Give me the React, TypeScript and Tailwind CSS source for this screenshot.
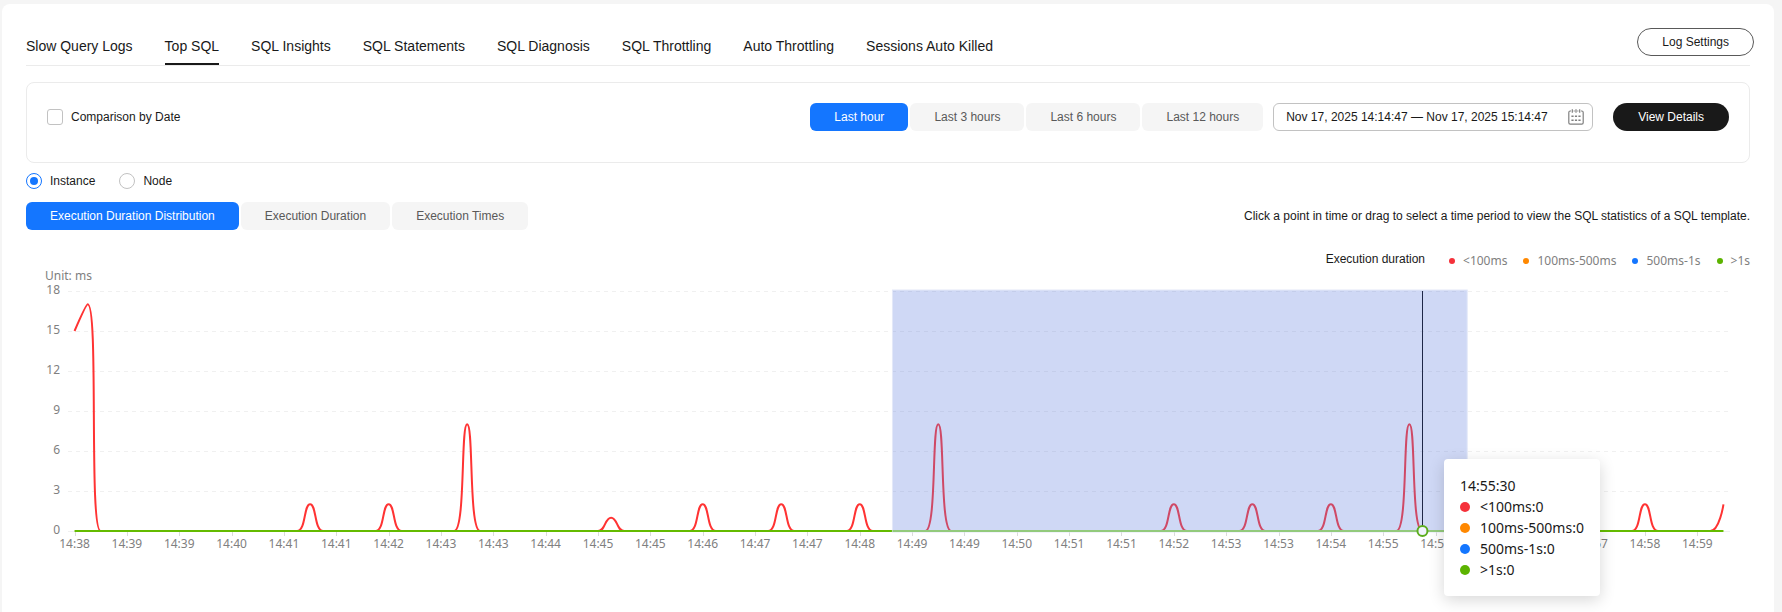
import React, { useEffect, useLayoutEffect, useRef, useState } from 'react';
import { clsx } from 'clsx';

const tabs = [
  "Slow Query Logs",
  "Top SQL",
  "SQL Insights",
  "SQL Statements",
  "SQL Diagnosis",
  "SQL Throttling",
  "Auto Throttling",
  "Sessions Auto Killed",
];

const ranges = ["Last hour", "Last 3 hours", "Last 6 hours", "Last 12 hours"];
const metrics = ["Execution Duration Distribution", "Execution Duration", "Execution Times"];

const legend = [
  { label: "<100ms", dot: "bg-[#f5313a]" },
  { label: "100ms-500ms", dot: "bg-[#ff8800]" },
  { label: "500ms-1s", dot: "bg-[#1476ff]" },
  { label: ">1s", dot: "bg-[#5cb300]" },
];

// one sample every 10 seconds, starting at 14:38:20
const SAMPLE_COUNT = 127;
const START_SECONDS = 14 * 3600 + 38 * 60 + 20;
const samples: Record<number, number> = {
  0: 15, 1: 17, 18: 2, 24: 2, 30: 8, 41: 1, 48: 2, 54: 2, 60: 2,
  66: 8, 84: 2, 90: 2, 96: 2, 102: 8, 120: 2, 126: 2,
};
const values = Array.from({ length: SAMPLE_COUNT }, (_, i) => samples[i] ?? 0);

const HOVER_INDEX = 103;
const BRUSH = { from: 62.5, to: 106.42 };

const GRID = { left: 42, right: 20, top: 22, height: 240 };
const MAX = 18;

type Point = [number, number];

const clamp = (v: number, a: number, b: number) =>
  Math.max(Math.min(a, b), Math.min(Math.max(a, b), v));

// smooth line whose control points never leave the range of the neighbouring samples
const smoothPath = (pts: Point[], smooth = 0.5) => {
  let d = `M${pts[0][0]},${pts[0][1]}`;
  let prevCp = pts[0];
  for (let i = 1; i < pts.length; i++) {
    const prev = pts[i - 1];
    const cur = pts[i];
    const next = pts[i + 1];
    let cpIn = cur;
    let cpOut = cur;
    if (next) {
      const lenPrev = Math.hypot(cur[0] - prev[0], cur[1] - prev[1]);
      const lenNext = Math.hypot(next[0] - cur[0], next[1] - cur[1]);
      const k = (smooth * lenNext) / (lenNext + lenPrev);
      const outX = clamp(cur[0] + (next[0] - prev[0]) * k, cur[0], next[0]);
      const outY = clamp(cur[1] + (next[1] - prev[1]) * k, cur[1], next[1]);
      cpIn = [
        clamp(cur[0] - ((outX - cur[0]) * lenPrev) / lenNext, prev[0], cur[0]),
        clamp(cur[1] - ((outY - cur[1]) * lenPrev) / lenNext, prev[1], cur[1]),
      ];
      cpOut = [
        clamp(cur[0] + ((cur[0] - cpIn[0]) * lenNext) / lenPrev, cur[0], next[0]),
        clamp(cur[1] + ((cur[1] - cpIn[1]) * lenNext) / lenPrev, cur[1], next[1]),
      ];
    }
    d += `C${prevCp[0]},${prevCp[1]} ${cpIn[0]},${cpIn[1]} ${cur[0]},${cur[1]}`;
    prevCp = cpOut;
  }
  return d;
};

const timeLabel = (index: number) => {
  const s = START_SECONDS + index * 10;
  return `${Math.floor(s / 3600)}:${String(Math.floor((s % 3600) / 60)).padStart(2, "0")}`;
};

const CalendarIcon = () => (
  <svg width="16" height="16" viewBox="0 0 16 16" fill="none" stroke="#808080" aria-hidden="true">
    <path d="M3 2H2.2Q0.8 2 0.8 3.4V13.8Q0.8 15.2 2.2 15.2H13.8Q15.2 15.2 15.2 13.8V3.4Q15.2 2 13.8 2H13M5.6 2h1.2M9.2 2h1.2" strokeWidth="1.2" />
    <path d="M4.3 0.3v3.4M8 0.3v3.4M11.7 0.3v3.4" strokeWidth="1.2" />
    <path d="M3.4 7.2h2.2M6.9 7.2h2.2M10.4 7.2h2.2M3.4 11.2h2.2M6.9 11.2h2.2M10.4 11.2h2.2" strokeWidth="1.6" />
  </svg>
);

const Segmented: React.FC<{ items: string[]; label: string }> = ({ items, label }) => {
  const [active, setActive] = useState(items[0]);

  return (
    <div role="group" aria-label={label} className="flex gap-0.5">
      {items.map((item) => (
        <button
          key={item}
          type="button"
          aria-pressed={item === active}
          onClick={() => setActive(item)}
          className={clsx(
            "h-7 rounded-md px-6 whitespace-nowrap",
            item === active ? "bg-[#1476ff] text-white" : "bg-[#f5f5f5] text-[#595959]"
          )}
        >
          {item}
        </button>
      ))}
    </div>
  );
};

const Tooltip: React.FC<{ left: number }> = ({ left }) => (
  <div
    className="absolute top-[190px] rounded bg-white p-4 text-sm leading-[21px] whitespace-nowrap text-[#191919] shadow-[0_4px_16px_rgba(0,0,0,0.16)]"
    style={{ left }}
  >
    <div>14:55:30</div>
    {legend.map((item) => (
      <div key={item.label} className="flex items-center">
        <span className={clsx("mr-2.5 size-2.5 rounded-full", item.dot)} />
        <span>{item.label}:0</span>
      </div>
    ))}
  </div>
);

const DurationChart: React.FC = () => {
  const ref = useRef<HTMLDivElement>(null);
  const [width, setWidth] = useState(0);

  useLayoutEffect(() => {
    setWidth(ref.current?.clientWidth ?? 0);
  }, []);

  useEffect(() => {
    const onResize = () => setWidth(ref.current?.clientWidth ?? 0);
    window.addEventListener("resize", onResize);
    return () => window.removeEventListener("resize", onResize);
  }, []);

  const right = width - GRID.right;
  const bottom = GRID.top + GRID.height;
  const band = (right - GRID.left) / SAMPLE_COUNT;
  const x = (i: number) => GRID.left + band * (i + 0.5);
  const y = (v: number) => bottom - (v / MAX) * GRID.height;
  const hoverX = Math.round(x(HOVER_INDEX)) + 0.5;

  return (
    <div ref={ref} className="relative h-[344px] overflow-hidden font-['Noto_Sans',sans-serif]">
      {width > 0 && (
        <>
          <svg width={width} height="344" className="block" role="img" aria-label="Execution duration distribution">
            <g fill="#808080" fontSize="12">
              <text x="19" y="11">Unit: ms</text>
              {[18, 15, 12, 9, 6, 3, 0].map((v) => (
                <text key={v} x="34" y={y(v) + 3} textAnchor="end">{v}</text>
              ))}
            </g>
            <g stroke="#f0f0f0">
              {[18, 15, 12, 9, 6, 3].map((v) => (
                <line key={v} x1={GRID.left} x2={right} y1={y(v) + 0.5} y2={y(v) + 0.5} strokeDasharray="4 4" />
              ))}
              <line x1={GRID.left} x2={right} y1={bottom + 0.5} y2={bottom + 0.5} />
            </g>
            {values.map((_, i) => i % 4 === 0 && (
              <g key={i}>
                <line x1={Math.round(x(i)) + 0.5} x2={Math.round(x(i)) + 0.5} y1={bottom} y2={bottom + 5} stroke="#dbdbdb" />
                <text x={x(i)} y={bottom + 17} textAnchor="middle" fill="#808080" fontSize="12">{timeLabel(i)}</text>
              </g>
            ))}
            <path d={smoothPath(values.map((v, i): Point => [x(i), y(v)]))} fill="none" stroke="#ff3333" strokeWidth="2" strokeLinejoin="bevel" />
            <line x1={x(0)} x2={x(SAMPLE_COUNT - 1)} y1={bottom} y2={bottom} stroke="#64bb00" strokeWidth="2" />
            <rect
              x={x(BRUSH.from)}
              y={GRID.top - 1}
              width={x(BRUSH.to) - x(BRUSH.from)}
              height={GRID.height + 2}
              fill="#5f7fdf"
              fillOpacity="0.3"
              stroke="#e3e8f8"
            />
            <line x1={x(BRUSH.from)} x2={x(BRUSH.to)} y1={bottom} y2={bottom} stroke="#93ca7c" strokeWidth="2" />
            <line x1={hoverX} x2={hoverX} y1={GRID.top} y2={bottom} stroke="#1f2747" />
            <circle cx={x(HOVER_INDEX)} cy={bottom} r="5" fill="#f0f3fd" stroke="#5cad1e" strokeWidth="2" />
          </svg>
          <Tooltip left={Math.round(x(HOVER_INDEX)) + 22} />
        </>
      )}
    </div>
  );
};

const App: React.FC = () => {
  const [scope, setScope] = useState("Instance");

  return (
    <div className="min-h-screen bg-[#f5f5f5] pt-1 pr-2 pl-0.5 font-['Liberation_Sans',Arial,sans-serif] text-xs text-[#191919]">
      <main className="rounded-t-lg bg-white px-6 pt-6">
        <header className="relative mb-4 flex border-b border-[#ebebeb]">
          <nav className="flex gap-8 text-sm">
            {tabs.map((tab) => (
              <a
                key={tab}
                href="#"
                className={clsx(
                  "border-b-2 pt-2 pb-[7px] leading-5 whitespace-nowrap",
                  tab === "Top SQL" ? "border-[#191919]" : "border-transparent"
                )}
              >
                {tab}
              </a>
            ))}
          </nav>
          <button type="button" className="absolute top-0 -right-1 h-7 rounded-full border border-[#595959] px-6">
            Log Settings
          </button>
        </header>

        <section className="flex items-start justify-between rounded-lg border border-[#ebebeb] px-5 pt-5 pb-[31px]">
          <label className="flex h-7 items-center gap-2">
            <input type="checkbox" className="size-4 appearance-none rounded-[3px] border border-[#c2c2c2] bg-white" />
            Comparison by Date
          </label>
          <div className="flex items-center">
            <Segmented items={ranges} label="Time range" />
            <div className="mr-5 ml-2.5 flex h-7 w-80 items-center rounded-md border border-[#c2c2c2] pr-2 pl-3">
              <input
                type="text"
                aria-label="Time period"
                defaultValue="Nov 17, 2025 14:14:47 — Nov 17, 2025 15:14:47"
                className="min-w-0 flex-1 outline-none"
              />
              <CalendarIcon />
            </div>
            <button type="button" className="h-7 rounded-full bg-[#191919] px-[25px] text-white">
              View Details
            </button>
          </div>
        </section>

        <div className="mt-[9px] mb-3 flex gap-6">
          {["Instance", "Node"].map((item) => (
            <label key={item} className="flex h-4.5 items-center gap-2">
              <input
                type="radio"
                name="scope"
                checked={scope === item}
                onChange={() => setScope(item)}
                className="grid size-4 appearance-none place-items-center rounded-full border border-[#c2c2c2] before:size-2 before:rounded-full checked:border-[#1476ff] checked:before:bg-[#1476ff]"
              />
              {item}
            </label>
          ))}
        </div>

        <div className="flex items-center justify-between">
          <Segmented items={metrics} label="Metric" />
          <p>Click a point in time or drag to select a time period to view the SQL statistics of a SQL template.</p>
        </div>

        <div className="mt-[19px] flex items-center justify-end gap-6">
          <span>Execution duration</span>
          <ul className="flex gap-4 pt-1 font-['Noto_Sans',sans-serif] text-[#808080]">
            {legend.map((item) => (
              <li key={item.label} className="flex items-center gap-2">
                <span className={clsx("size-1.5 rounded-full", item.dot)} />
                {item.label}
              </li>
            ))}
          </ul>
        </div>

        <DurationChart />
      </main>
    </div>
  );
};

export default App;
